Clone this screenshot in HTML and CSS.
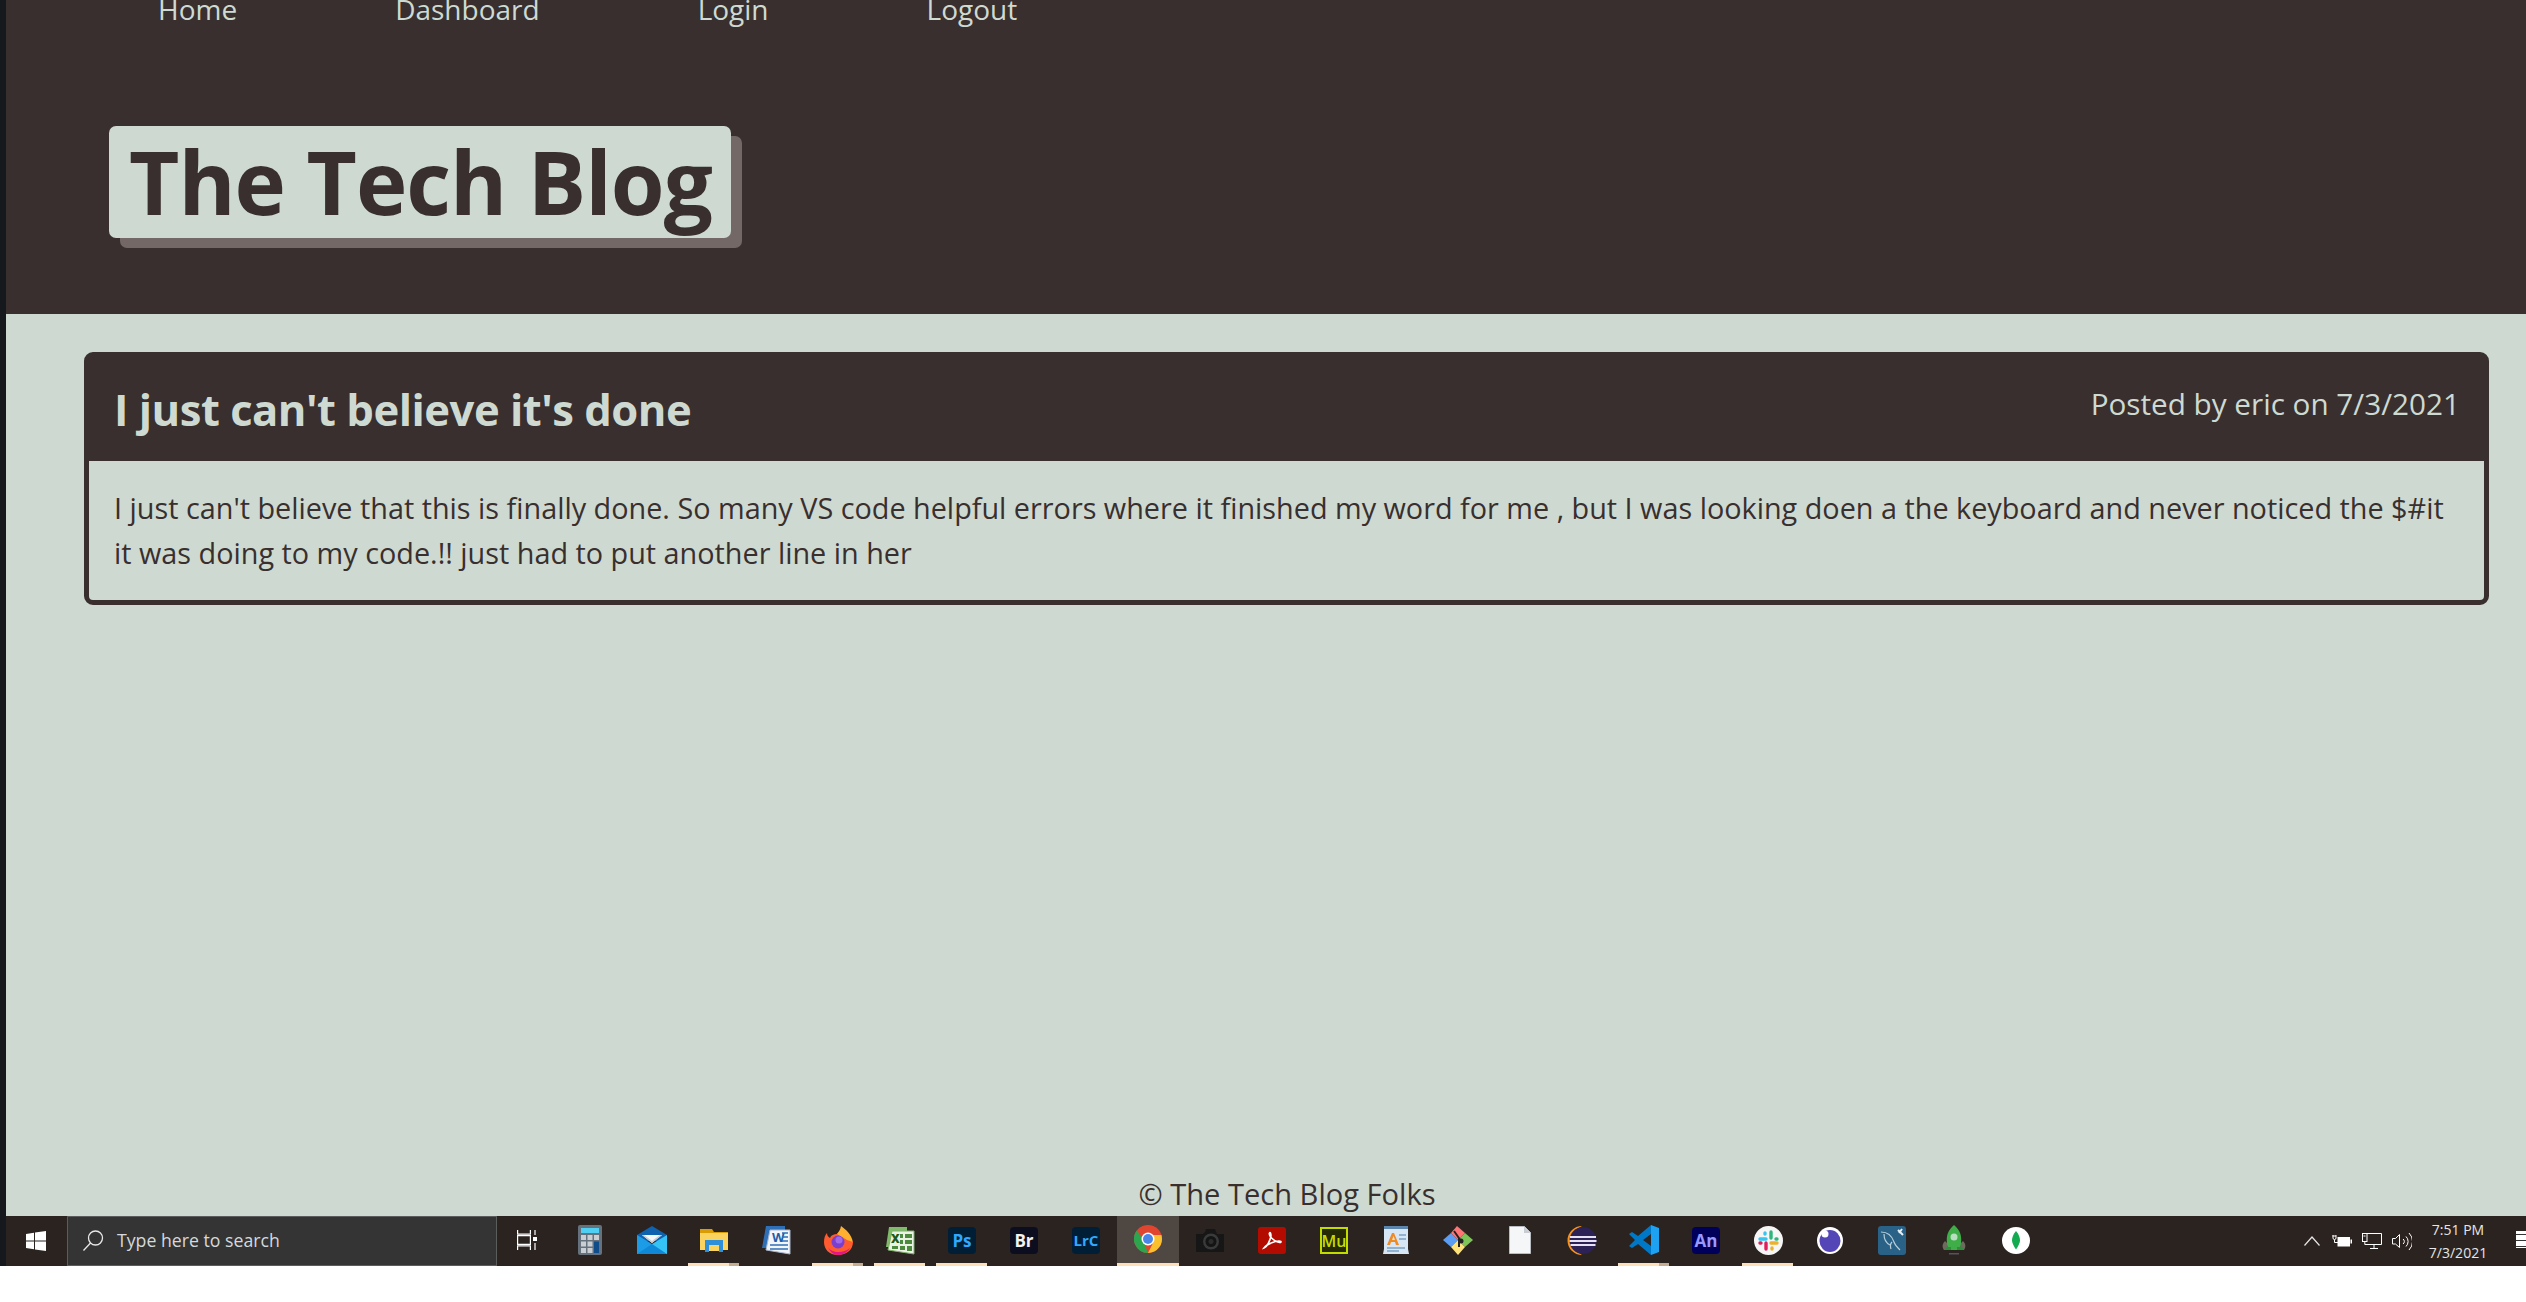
FILE: index.html
```html
<!DOCTYPE html>
<html lang="en">
<head>
    <meta charset="UTF-8">
    <meta name="viewport" content="width=device-width, initial-scale=1.0">
    <title>The Tech Blog</title>
    <link rel="stylesheet" href="styles.css">
</head>
<body>
    <div class="screen">
        <header class="site-header">
            <nav class="site-nav">
                <a href="#">Home</a>
                <a href="#">Dashboard</a>
                <a href="#">Login</a>
                <a href="#">Logout</a>
            </nav>
            <h1 class="site-title">The Tech Blog</h1>
        </header>

        <main class="content">
            <article class="post">
                <div class="post-head">
                    <h2>I just can't believe it's done</h2>
                    <p>Posted by eric on 7/3/2021</p>
                </div>
                <div class="post-body">
                    I just can't believe that this is finally done. So many VS code helpful errors where it finished my word for me , but I was looking doen a the keyboard and never noticed the $#it it was doing to my code.!! just had to put another line in her
                </div>
            </article>
        </main>

        <footer class="site-footer">© The Tech Blog Folks</footer>

        <div class="taskbar">
            <div class="start">
                <svg width="20" height="20" viewBox="0 0 20 20"><path fill="#fff" d="M0 3l8-1.2v7.7H0zM9 1.600L20 0v9.500H9zM0 10.500h8v7.700L0 17zM9 10.500h11V20L9 18.400z"/></svg>
            </div>
            <div class="search">
                <svg width="22" height="21" viewBox="0 0 22 21" fill="none" stroke="#e8e8e8" stroke-width="1.300"><circle cx="13.500" cy="8" r="7"/><path d="M8.500 13L1.500 20.500"/></svg>
                <span>Type here to search</span>
            </div>
            <div class="slot task-view">
                <svg width="20" height="20" viewBox="0 0 20 20" fill="none" stroke="#fff" stroke-width="1.200"><path d="M.6 0v4.200h12.800V0M.6 5.600h12.800v8.800H.6zM.6 20v-4.200h12.800V20M18 0v5M18 13v7"/><rect x="16" y="7" width="4" height="4" fill="#fff" stroke="none"/></svg>
            </div>
            <div class="slot">
                <svg width="24" height="30" viewBox="0 0 24 30"><rect width="24" height="30" rx="2" fill="#65717d"/><rect x="3" y="3" width="18" height="5" fill="#4fd0f2"/><path fill="#c9ced3" d="M3 10h5v5H3zM9.500 10h5v5h-5zM16 10h5v5h-5zM3 16.500h5v5H3zM9.500 16.500h5v5h-5zM3 23h5v5H3zM9.500 23h5v5h-5z"/><rect x="16" y="16.500" width="5" height="11.500" fill="#0f4c8a"/></svg>
            </div>
            <div class="slot">
                <svg width="30" height="28" viewBox="0 0 30 28"><path fill="#0f62ae" d="M0 9L15 0l15 9v6H0z"/><path fill="#f4f6f8" d="M5 9h20l-10 8z"/><path fill="#c9ccd0" d="M15 17l10-8-2 0-8 6-8-6H5z"/><path fill="#1c9be6" d="M0 9l15 9v10H0z"/><path fill="#35c3f5" d="M30 9l-15 9v10h15z"/><path fill="#1088d8" d="M0 28l15-10 15 10z"/></svg>
            </div>
            <div class="slot open stacked">
                <svg width="28" height="24" viewBox="0 0 28 24"><path fill="#d99b06" d="M0 1h12l2 3h14v5H0z"/><path fill="#fbd35f" d="M0 5h28v17H0z"/><path fill="#2f8fd8" d="M5 12h18v12h-4v-7H9v7H5z"/><rect x="9" y="20" width="10" height="3" fill="#fbd35f"/></svg>
            </div>
            <div class="slot">
                <svg width="29" height="30" viewBox="0 0 29 30"><path fill="#2f6fb5" d="M4 1h19v22H0z"/><path fill="#f2f5fa" stroke="#a8b8d0" d="M8 5h20v24L4 25z"/><text class="ico-text" x="10" y="17" font-size="13" font-weight="700" fill="#1f5da8">W</text><path stroke="#2f6fb5" stroke-width="1.500" d="M20 8h6M20 12h6M20 16h6M8 20h18M8 24h18"/></svg>
            </div>
            <div class="slot open stacked">
                <svg width="29" height="29" viewBox="0 0 29 29"><path fill="#ffb02e" d="M17 0c4 3 11 8 12 17H8C8 10 16 8 17 0z"/><path fill="#ff5b2e" d="M14 29C5 29 0 23 0 16c0-4 1-7 3-9 0 2 1 4 3 5 1-3 4-4 7-4l10 6 6 2c0 8-7 13-15 13z"/><path fill="#e31587" d="M4 21c3 6 15 7 22 1-2 4-7 7-12 7-4 0-8-3-10-8z"/><circle cx="14" cy="16" r="6.500" fill="#7b3fd0"/><circle cx="15" cy="14" r="3.500" fill="#a06ae6"/></svg>
            </div>
            <div class="slot open">
                <svg width="29" height="29" viewBox="0 0 29 29"><path fill="#7fbb6a" d="M3 1h18v20H0z"/><path fill="#eaf3e3" stroke="#7fae6a" d="M6 5h22v23L2 24z"/><path fill="#4c8a3c" d="M14 8h3v4h-3zM19 8h7v4h-7zM14 14h3v4h-3zM19 14h7v4h-7zM6 20h6v3H6zM14 20h5v4h-5zM21 20h5v5h-5z"/><text class="ico-text" x="5" y="17" font-size="12" font-weight="800" fill="#1e5a20">X</text></svg>
            </div>
            <div class="slot open">
                <svg width="28" height="27" viewBox="0 0 28 27"><rect width="28" height="27" rx="4" fill="#001e36"/><text class="ico-text" x="14" y="20" text-anchor="middle" font-size="17" font-weight="700" fill="#31a8ff">Ps</text></svg>
            </div>
            <div class="slot">
                <svg width="28" height="27" viewBox="0 0 28 27"><rect width="28" height="27" rx="4" fill="#0d0d20"/><text class="ico-text" x="14" y="20" text-anchor="middle" font-size="17" font-weight="700" fill="#f2f2f2">Br</text></svg>
            </div>
            <div class="slot">
                <svg width="28" height="27" viewBox="0 0 28 27"><rect width="28" height="27" rx="4" fill="#001e36"/><text class="ico-text" x="14" y="19" text-anchor="middle" font-size="15" font-weight="700" fill="#31a8ff">LrC</text></svg>
            </div>
            <div class="slot active">
                <svg width="28" height="28" viewBox="0 0 28 28"><circle cx="14" cy="14" r="14" fill="#e0452f"/><path fill="#2da44e" d="M14 28A14 14 0 0 1 3 5.300L9 15l5 13z"/><path fill="#fbc02d" d="M14 28a14 14 0 0 0 13.400-18H14l5 8z"/><circle cx="14" cy="14" r="6.500" fill="#fff"/><circle cx="14" cy="14" r="5" fill="#4a86e8"/></svg>
            </div>
            <div class="slot">
                <svg width="30" height="23" viewBox="0 0 30 23"><path fill="#171616" d="M1 5h7l2-2 1-3h9l2 5h7v18H1z"/><circle cx="16" cy="12.500" r="8" fill="#3a3a3a"/><circle cx="16" cy="12.500" r="5.500" fill="#141414"/><circle cx="16" cy="12.500" r="2.500" fill="#2c2c2c"/></svg>
            </div>
            <div class="slot">
                <svg width="28" height="27" viewBox="0 0 28 27"><rect width="28" height="27" rx="3" fill="#b30b00"/><path fill="none" stroke="#fff" stroke-width="1.600" d="M6 21c3-1 6-7 7-12 0-3-1-4-1.500-3-1 2 3 8 10 9.500 1.500.3 2-1 1-1.300-3-1-13 2-16.500 6.800z"/></svg>
            </div>
            <div class="slot">
                <svg width="28" height="27" viewBox="0 0 28 27"><rect x="1" y="1" width="26" height="25" fill="#262b05" stroke="#c3dc00" stroke-width="2"/><text class="ico-text" x="14" y="20" text-anchor="middle" font-size="16" font-weight="600" fill="#c3dc00">Mu</text></svg>
            </div>
            <div class="slot">
                <svg width="26" height="29" viewBox="0 0 26 29"><path fill="#5d86ad" d="M1 0h24v4H1z"/><path fill="#d6e6f4" d="M1 3h24v20l1 5H0l1-5z"/><path fill="#f08a24" d="M4 19l5-12h2l5 12h-3l-1-3H8l-1 3zM9 14h3l-1.500-4z"/><path stroke="#7ba2c4" stroke-width="1.500" d="M16 9h7M16 13h7M4 22h18M4 25h12"/></svg>
            </div>
            <div class="slot">
                <svg width="30" height="29" viewBox="0 0 30 29"><path fill="#5b9df2" d="M8 7l7 7-7 7-8-7z"/><path fill="#ff7575" d="M14 0l8 7-7 7-7-7z"/><path fill="#7fc458" d="M22 7l8 7-8 7-7-7z"/><path fill="#ffe27a" d="M15 14l7 7-7 8-7-8z"/><path fill="none" stroke="#222" stroke-width="2" d="M11 5l7 10M16 12v9"/><circle cx="18" cy="15" r="2.500" fill="#222"/></svg>
            </div>
            <div class="slot">
                <svg width="22" height="28" viewBox="0 0 22 28"><path fill="#f5f6f8" stroke="#b9bcc2" d="M.5.500h15l6 6v21H.5z"/><path fill="#c9ccd2" d="M15 .500l6.500 6.500H15z"/></svg>
            </div>
            <div class="slot">
                <svg width="30" height="29" viewBox="0 0 30 29"><path fill="#f7941e" d="M15 0a14.500 14.500 0 0 0 0 29A16 16 0 0 1 15 0z"/><circle cx="16" cy="14.500" r="13.500" fill="#2c2255"/><path fill="#e6e2f2" d="M3 10h26v2H3zM2.500 14h27v2h-27zM3.500 18h25v2h-25z"/></svg>
            </div>
            <div class="slot open stacked">
                <svg width="30" height="30" viewBox="0 0 30 30"><path fill="#0078c8" d="M22 0L9 11 3 7 0 9l6 6-6 6 3 2 6-4 13 11V21l-8-6 8-6z"/><path fill="#1ea1f1" d="M22 0l8 3v24l-8 3z"/></svg>
            </div>
            <div class="slot">
                <svg width="28" height="27" viewBox="0 0 28 27"><rect width="28" height="27" rx="4" fill="#00005b"/><text class="ico-text" x="14" y="20" text-anchor="middle" font-size="17" font-weight="700" fill="#9999ff">An</text></svg>
            </div>
            <div class="slot open">
                <svg width="29" height="29" viewBox="0 0 29 29"><circle cx="14.500" cy="14.500" r="14.500" fill="#f6f6f6"/><g stroke-width="3.400" stroke-linecap="round" fill="none"><path stroke="#36c5f0" d="M6 13h6M11 7v1"/><path stroke="#2eb67d" d="M17 6v6M22 13h1"/><path stroke="#ecb22e" d="M17 17h6M18 23v-1"/><path stroke="#e01e5a" d="M12 17v6M7 17h-1"/></g></svg>
            </div>
            <div class="slot">
                <svg width="26" height="27" viewBox="0 0 26 27"><ellipse cx="13" cy="13.500" rx="13" ry="13.500" fill="#fff"/><ellipse cx="13" cy="14" rx="10.500" ry="11" fill="#5546b8"/><circle cx="8" cy="7" r="3.500" fill="#fff"/></svg>
            </div>
            <div class="slot">
                <svg width="28" height="29" viewBox="0 0 28 29"><rect width="28" height="29" rx="3" fill="#2a6186"/><path fill="none" stroke="#b7cfdc" stroke-width="1.200" d="M3 6c7 0 11 4 13 10 1 3 3 5 6 8M6 8c0 5 2 9 6 11M14 16c-2 2-2 4-1 7"/><path stroke="#e8f0f4" stroke-width="2" d="M20 4l5 5M24 3l-3 4"/></svg>
            </div>
            <div class="slot">
                <svg width="24" height="30" viewBox="0 0 24 30"><path fill="#6e6a5e" d="M3 16c-3 3-3 6-1 9h3l1-6zM21 16c3 3 3 6 1 9h-3l-1-6z"/><path fill="#3fae49" d="M12 0c6 5 8 11 7 18l-1 7H6l-1-7C4 11 6 5 12 0z"/><circle cx="12" cy="12" r="3.500" fill="#b9dfc0"/><path fill="#2e8f3a" d="M3 22h6v3H3zM15 22h6v3h-6z"/><rect x="7" y="28" width="10" height="1.500" fill="#555"/></svg>
            </div>
            <div class="slot">
                <svg width="28" height="27" viewBox="0 0 28 27"><ellipse cx="14" cy="13.500" rx="14" ry="13.500" fill="#fff"/><path fill="#13aa52" d="M14 4c3 3 4 7 4 9.500s-2 6-4 9c-2-3-4-6.500-4-9S11 7 14 4z"/></svg>
            </div>
            <div class="tray">
                <svg class="tray-chevron" width="16" height="10" viewBox="0 0 16 10" fill="none" stroke="#e6e6e6" stroke-width="1.200"><path d="M.5 9.500L8 1l7.500 8.500"/></svg>
                <svg width="20" height="12" viewBox="0 0 20 12" fill="none" stroke="#fff" stroke-width="1"><path d="M1 0v3a1.500 1.500 0 0 0 3 0V0M.5 1h3.500M2.500 4.500v3H6"/><rect x="5.500" y="2" width="12.500" height="9.500" fill="#fff" stroke="none"/><rect x="18.500" y="4.500" width="1.500" height="4" fill="#fff" stroke="none"/></svg>
                <svg width="20" height="16" viewBox="0 0 20 16" fill="none" stroke="#fff" stroke-width="1"><path d="M5 .500h14.500v11H5M8 15.500h8M12 11.500v4"/><rect x=".5" y=".5" width="4.500" height="8"/><path d="M2.800 8.500V11.500H5M1.500 3h2"/></svg>
                <svg width="20" height="19" viewBox="0 0 20 19" fill="none" stroke="#fff" stroke-width="1"><path d="M.5 6.500h3l4-4v13l-4-3.500h-3zM11 7a3 3 0 0 1 0 5M14 4.500a7 7 0 0 1 0 10M17 1a12 12 0 0 1 0 17"/></svg>
                <div class="clock"><span>7:51 PM</span><span>7/3/2021</span></div>
                <div class="notify"></div>
            </div>
        </div>
    </div>
</body>
</html>
```

FILE: styles.css
```css
* {
    box-sizing: border-box;
    margin: 0;
    padding: 0;
}

html, body {
    background-color: #fff;
    height: 100%;
    overflow: hidden;
}

body {
    font-family: 'Open Sans', 'Noto Sans', sans-serif;
}

.screen {
    height: 1266px;
    display: flex;
    flex-direction: column;
    background-color: #cedad1;
    border-left: 6px solid #15181d;
    overflow: hidden;
}

.site-header {
    background-color: #392f2f;
    height: 314px;
    flex-shrink: 0;
}

.site-nav {
    display: flex;
    gap: 158px;
    padding-left: 152px;
    height: 20px;
    line-height: 18px;
}

.site-nav a {
    color: #cedad1;
    font-size: 28px;
    text-decoration: none;
}

.site-title {
    display: inline-block;
    margin: 106px 0 0 103px;
    height: 112px;
    line-height: 110px;
    padding: 0 19px 0 20px;
    background-color: #cedad1;
    color: #392f2f;
    font-size: 87px;
    font-weight: 700;
    letter-spacing: -1px;
    border-radius: 7px;
    box-shadow: 11px 10px 0 #736866;
}

.content {
    flex: 1;
    padding: 38px 37px 0 78px;
}

.post {
    background-color: #cedad1;
    border: 5px solid #392f2f;
    border-radius: 9px;
}

.post-head {
    background-color: #392f2f;
    color: #cedad1;
    height: 104px;
    display: flex;
    justify-content: space-between;
    padding: 0 24px 0 25px;
}

.post-head h2 {
    font-size: 43.6px;
    font-weight: 700;
    letter-spacing: -0.5px;
    line-height: 104px;
}

.post-head p {
    font-size: 29.7px;
    line-height: 93px;
}

.post-body {
    padding: 24px 24px 25px 25px;
    color: #392f2f;
    font-size: 28.8px;
    line-height: 45px;
}

.site-footer {
    flex-shrink: 0;
    height: 40px;
    line-height: 36px;
    padding-left: 42px;
    text-align: center;
    color: #392f2f;
    font-size: 29.1px;
}

.taskbar {
    flex-shrink: 0;
    height: 50px;
    display: flex;
    background-color: #2b2320;
}

.start {
    width: 61px;
    display: flex;
    align-items: center;
    justify-content: center;
    padding-right: 2px;
}

.search {
    width: 430px;
    display: flex;
    align-items: center;
    gap: 13px;
    padding: 0 0 2px 14px;
    background-color: #343434;
    border: 1px solid #5c5c5c;
    color: #d5d9dc;
    font-size: 17.7px;
}

.slot {
    position: relative;
    width: 62px;
    flex-shrink: 0;
    display: flex;
    align-items: center;
    justify-content: center;
    padding-bottom: 2px;
}

.task-view {
    padding-right: 3px;
}

.slot.open::after {
    content: '';
    position: absolute;
    left: 5px;
    bottom: 0;
    width: 51px;
    height: 3px;
    background-color: #fddfb9;
}

.slot.stacked::after {
    background: linear-gradient(to right, #fddfb9 80%, #c5ad93 80%);
}

.slot.active {
    background-color: #4f4742;
    border-bottom: 3px solid #fddfb9;
}

.ico-text {
    font-family: 'Open Sans', sans-serif;
}

.tray {
    flex: 1;
    display: flex;
    align-items: center;
    justify-content: flex-end;
    gap: 10px;
    color: #e6e6e6;
}

.tray-chevron {
    margin-right: 2px;
}

.clock {
    display: flex;
    flex-direction: column;
    align-items: center;
    width: 72px;
    font-size: 14px;
    line-height: 23px;
}

.notify {
    width: 10px;
    height: 17px;
    margin: 0 0 3px 12px;
    background: repeating-linear-gradient(to bottom, #fff 0 3px, #333 3px 4px, #fff 4px 6px);
}
```
